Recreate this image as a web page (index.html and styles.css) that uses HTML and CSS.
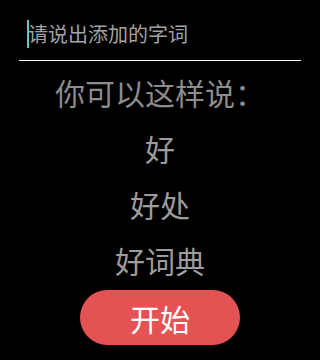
FILE: index.html
```html
<!DOCTYPE html>
<html lang="zh-CN">
<head>
<meta charset="utf-8">
<title>添加字词</title>
<link rel="stylesheet" href="styles.css">
</head>
<body>
<div class="screen">
  <div class="field">
    <span class="caret"></span>
    <span class="placeholder">请说出添加的字词</span>
  </div>
  <div class="hints">
    <div class="hint-title">你可以这样说：</div>
    <div class="hint">好</div>
    <div class="hint">好处</div>
    <div class="hint">好词典</div>
  </div>
  <button class="start">开始</button>
</div>
</body>
</html>
```
FILE: styles.css
```css
html, body {
  margin: 0;
  padding: 0;
  background: #000;
}
body {
  width: 320px;
  height: 360px;
  overflow: hidden;
  font-family: "Noto Sans CJK SC", "Noto Sans", sans-serif;
}
.screen {
  display: flex;
  flex-direction: column;
}
.field {
  margin: 0 19px;
  height: 52px;
  padding-top: 8px;
  padding-left: 8px;
  border-bottom: 1px solid #fff;
  display: flex;
  align-items: center;
}
.caret {
  width: 2px;
  height: 28px;
  margin-right: -1px;
  background: #63cbbd;
  flex: none;
}
.placeholder {
  font-size: 20px;
  line-height: 28px;
  color: #a3a3a3;
}
.hints {
  margin-top: 3px;
  text-align: center;
  font-size: 30px;
  line-height: 56px;
  color: #9c9c9c;
}
.hint-title {
  color: #8c8c8c;
}
.start {
  align-self: center;
  width: 160px;
  height: 55px;
  margin-top: 2px;
  border: none;
  border-radius: 28px;
  background: #e45353;
  color: #fff;
  font-family: "Noto Sans CJK SC", "Noto Sans", sans-serif;
  font-size: 30px;
  padding: 0;
}
```
